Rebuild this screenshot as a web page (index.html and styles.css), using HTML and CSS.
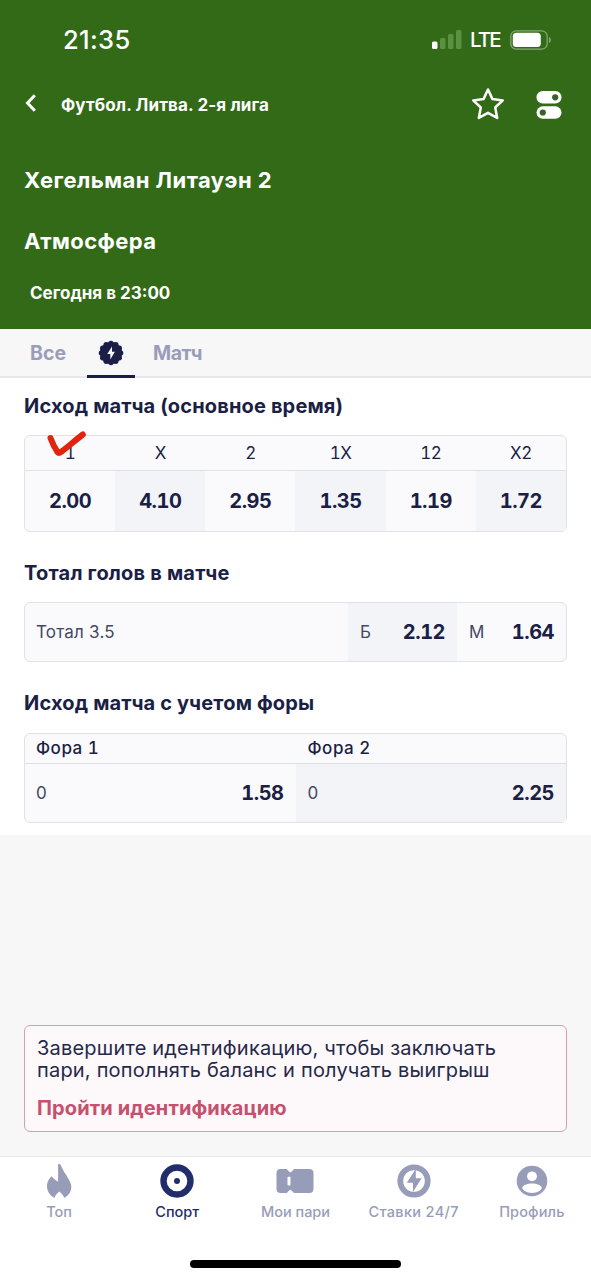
FILE: index.html
```html
<!DOCTYPE html>
<html lang="ru">
<head>
<meta charset="utf-8">
<title>Хегельман Литауэн 2 — Атмосфера</title>
<link rel="stylesheet" href="styles.css">
</head>
<body>
<div class="screen">
  <header class="header">
    <div class="status">
      <span class="clock">21:35</span>
      <div class="status-right">
        <svg width="30" height="20" viewBox="0 0 30 20"><g fill="#5b9043"><rect x="8" y="8" width="5.500" height="11" rx="1.500"/><rect x="16" y="4" width="5.500" height="15" rx="1.500"/><rect x="24" y="0" width="5.500" height="19" rx="1.500"/></g><rect x="0" y="11.500" width="5.500" height="7.500" rx="1.500" fill="#fff"/></svg>
        <span class="lte">LTE</span>
        <svg width="42" height="20" viewBox="0 0 42 20"><rect x=".8" y=".8" width="36.400" height="18.400" rx="5.500" fill="none" stroke="#84a974" stroke-width="1.300"/><rect x="2.800" y="2.800" width="28" height="14.200" rx="3.500" fill="#fff"/><path d="M39 7c2.400.8 2.400 5.200 0 6z" fill="#84a974"/></svg>
      </div>
    </div>
    <div class="topbar">
      <svg class="back" width="12" height="18" viewBox="0 0 12 18"><path d="M9.800 1.300 2.500 9l7.300 7.700" fill="none" stroke="#fff" stroke-width="3"/></svg>
      <span class="league">Футбол. Литва. 2-я лига</span>
      <svg class="star" width="34" height="34" viewBox="0 0 34 34"><path d="M17 2.500l4.500 9.600 10.300 1.300-7.600 7.100 2 10.400-9.200-5.100-9.200 5.100 2-10.400-7.600-7.100 10.300-1.300z" fill="none" stroke="#fff" stroke-width="2.500" stroke-linejoin="round"/></svg>
      <svg class="toggles" width="26" height="28" viewBox="0 0 26 28"><rect x=".5" y="0" width="25" height="12.500" rx="6.250" fill="#fff"/><rect x=".5" y="15.300" width="25" height="12.500" rx="6.250" fill="#fff"/><circle cx="19.200" cy="6.300" r="3.100" fill="#36612a"/><circle cx="6.800" cy="21.500" r="3.100" fill="#36612a"/></svg>
    </div>
    <div class="team home">Хегельман Литауэн 2</div>
    <div class="team away">Атмосфера</div>
    <div class="date">Сегодня в 23:00</div>
  </header>

  <nav class="tabs">
    <span class="tab all">Все</span>
    <span class="tab active">
      <svg width="26" height="26" viewBox="-13 -13 26 26"><g fill="#1b1f48"><circle r="11"/><circle cx="0" cy="-9.600" r="2.700"/><circle cx="4.800" cy="-8.310" r="2.700"/><circle cx="8.310" cy="-4.800" r="2.700"/><circle cx="9.600" cy="0" r="2.700"/><circle cx="8.310" cy="4.800" r="2.700"/><circle cx="4.800" cy="8.310" r="2.700"/><circle cx="0" cy="9.600" r="2.700"/><circle cx="-4.800" cy="8.310" r="2.700"/><circle cx="-8.310" cy="4.800" r="2.700"/><circle cx="-9.600" cy="0" r="2.700"/><circle cx="-8.310" cy="-4.800" r="2.700"/><circle cx="-4.800" cy="-8.310" r="2.700"/></g><path d="M1-6.500-3.700 1h3v5.500L3.900-1.200H1z" fill="#f7f7f9"/></svg>
    </span>
    <span class="tab match">Матч</span>
  </nav>

  <main class="markets">
    <h2 class="title t1">Исход матча (основное время)</h2>
    <div class="table outcome">
      <div class="heads"><span>1</span><span>X</span><span>2</span><span>1X</span><span>12</span><span>X2</span></div>
      <div class="odds"><b>2.00</b><b>4.10</b><b>2.95</b><b>1.35</b><b>1.19</b><b>1.72</b></div>
      <svg class="mark" width="44" height="30" viewBox="0 0 44 30"><path d="M5.500 8c2 5.500 4.500 10.500 7 14 1 1.200 2 1.200 3.500 0C22 17.500 30 10.500 37.800 4.500" fill="none" stroke="#e2230d" stroke-width="6" stroke-linecap="round" stroke-linejoin="round"/></svg>
    </div>

    <h2 class="title t2">Тотал голов в матче</h2>
    <div class="table total">
      <span class="name">Тотал 3.5</span>
      <div class="pick shade"><span>Б</span><b>2.12</b></div>
      <div class="pick"><span>М</span><b>1.64</b></div>
    </div>

    <h2 class="title t3">Исход матча с учетом форы</h2>
    <div class="table handicap">
      <div class="sides"><span>Фора 1</span><span>Фора 2</span></div>
      <div class="picks">
        <div class="pick"><span>0</span><b>1.58</b></div>
        <div class="pick shade"><span>0</span><b>2.25</b></div>
      </div>
    </div>
  </main>

  <section class="space">
    <div class="alert">
      <p>Завершите идентификацию, чтобы заключать<br>пари, пополнять баланс и получать выигрыш</p>
      <a class="link">Пройти идентификацию</a>
    </div>
  </section>

  <footer class="bottom">
    <div class="nav">
      <div class="item"><svg width="36" height="36" viewBox="0 0 36 36"><path d="M17.800 1c1.200 0 1.900.6 2.500 2.200C23.500 11 30.300 17.500 30.300 24c0 4.500-2.300 7.800-5.900 10.300-.9.600-1.400.4-1.700-.5-.9-2.200-2.500-3.700-4.400-5.300-1.800 1.600-3.500 3-4.400 5.300-.3.900-.8 1.100-1.700.5C8.600 31.800 6 28 6 23.300c0-4.600 2.500-8.300 4.700-10 1.500 1.900 4 4 6.400 5.500V2c0-.6.100-1 .7-1z" fill="#979db8"/></svg><span class="n1">Топ</span></div>
      <div class="item current"><svg width="36" height="36" viewBox="0 0 36 36"><circle cx="18" cy="18" r="13.500" fill="none" stroke="#222d6b" stroke-width="6.400"/><circle cx="18" cy="18" r="3" fill="#222d6b"/></svg><span class="n2">Спорт</span></div>
      <div class="item"><svg width="38" height="36" viewBox="0 0 38 36"><path d="M4.500 6h6.200l2.500 2.700c.8.800 1.500.8 2.300 0L18 6h15.500C36 6 37.500 7.500 37.500 10v16c0 2.500-1.500 4-4 4H18l-2.500-2.600c-.8-.8-1.500-.8-2.300 0L10.700 30H4.500C2 30 .5 28.500.5 26V10c0-2.500 1.500-4 4-4z" fill="#979db8"/><rect x="11.500" y="13.700" width="3" height="8.800" rx=".8" fill="#fff"/></svg><span class="n3">Мои пари</span></div>
      <div class="item"><svg width="36" height="36" viewBox="0 0 36 36"><circle cx="18" cy="18" r="13.700" fill="none" stroke="#979db8" stroke-width="5.800"/><path d="M19.800 6v9.200h5.800L17 29v-9.200h-6.200z" fill="#979db8"/></svg><span class="n4">Ставки 24/7</span></div>
      <div class="item"><svg width="36" height="36" viewBox="0 0 36 36"><circle cx="18" cy="18" r="15.300" fill="#979db8"/><circle cx="18" cy="13.300" r="4.900" fill="#fff"/><path d="M8.300 25c0-3 5-4.500 9.700-4.500s9.700 1.500 9.700 4.500c0 2-4.500 4.900-9.700 4.900S8.300 27 8.300 25z" fill="#fff"/></svg><span class="n5">Профиль</span></div>
    </div>
    <div class="homebar"></div>
  </footer>
</div>
</body>
</html>
```
FILE: styles.css
```css
* { box-sizing: border-box; }
body { margin: 0; font-family: Inter, "Noto Sans", sans-serif; color: #1b1f45; }
svg { display: block; flex: none; }
.screen { width: 591px; height: 1280px; display: flex; flex-direction: column; background: #f7f7f7; overflow: hidden; white-space: nowrap; }

.header { height: 329px; background: #336a18; color: #fff; font-weight: 700; }
.status { height: 80px; padding: 0 39px 1px 63px; display: flex; align-items: center; justify-content: space-between; }
.clock { font-size: 25.5px; font-weight: 500; letter-spacing: .35px; }
.status-right { display: flex; align-items: center; }
.lte { font-size: 20.5px; font-weight: 500; letter-spacing: -1.9px; margin: 0 8px 0 8px; width: 32px; }
.topbar { height: 50px; padding: 0 29px 0 25px; display: flex; align-items: center; }
.back { margin: 0 24px 4px 0; }
.league { font-size: 17px; flex: 1; letter-spacing: .12px; }
.star { margin: 0 31px 2px 0; }
.team { font-size: 22px; line-height: 60px; padding-left: 24px; letter-spacing: .45px; }
.home { margin-top: 20px; }
.away { margin-top: 1px; letter-spacing: .4px; }
.date { font-size: 17px; line-height: 30px; margin-top: 7px; padding-left: 30px; }

.tabs { height: 49px; padding-left: 30px; display: flex; align-items: stretch; border-bottom: 2px solid #e7e7e9; line-height: 49px; font-size: 19.5px; font-weight: 700; color: #9a9db8; }
.all { width: 57px; }
.active { width: 48px; height: 49px; display: flex; justify-content: center; padding-top: 11px; border-bottom: 3px solid #1b1f48; }
.match { margin-left: 18px; letter-spacing: -.5px; }

.markets { height: 457px; padding: 0 24px; background: #fff; }
.title { margin: 0; font-size: 20px; line-height: 57px; font-weight: 700; letter-spacing: .16px; }
.table { border: 1px solid #e1e1e6; border-radius: 6px; background: #fafafc; position: relative; }
b { font-size: 20px; font-weight: 700; font-variant-numeric: tabular-nums; letter-spacing: -.5px; }
.outcome { height: 97px; }
.heads { height: 35px; display: grid; grid-template-columns: repeat(6, 1fr); align-items: center; text-align: center; font-size: 17px; border-bottom: 1px solid #e1e1e6; font-variant-numeric: tabular-nums; letter-spacing: -.5px; }
.odds { height: 60px; line-height: 61px; display: grid; grid-template-columns: repeat(6, 1fr); text-align: center; overflow: hidden; }
.odds b:nth-child(even), .shade { background: #f3f4f7; }
.mark { position: absolute; left: 20px; top: -6px; }
.t2 { line-height: 60px; padding-top: 11px; height: 70px; letter-spacing: .2px; }
.total { height: 60px; display: flex; line-height: 59px; }
.name { flex: 1; padding-left: 11px; font-size: 17px; color: #444865; letter-spacing: .2px; }
.pick { display: flex; justify-content: space-between; padding: 0 12px 0 11px; }
.pick span { font-size: 17px; color: #444865; }
.total .pick { width: 109px; padding-left: 12px; }
.t3 { line-height: 60px; padding-top: 11px; height: 71px; letter-spacing: .16px; }
.handicap { height: 90px; }
.sides { height: 30px; line-height: 28px; display: grid; grid-template-columns: 1fr 1fr; font-size: 17px; font-weight: 500; border-bottom: 1px solid #dedee8; letter-spacing: .5px; font-variant-numeric: tabular-nums; }
.sides span { padding-left: 11px; }
.sides span:last-child, .picks .shade { padding-left: 12px; }
.picks { height: 58px; line-height: 58px; display: grid; grid-template-columns: 1fr 1fr; }

.space { flex: 1; padding: 190px 24px 0; }
.alert { height: 107px; padding: 12px 12px; border: 1px solid #d5a0b0; border-radius: 6px; background: #fdf8fa; }
.alert p { margin: 0; font-size: 20px; line-height: 21.5px; color: #25294a; letter-spacing: .2px; }
.link { display: block; margin-top: 12px; font-size: 20px; line-height: 30px; font-weight: 700; color: #c5516f; letter-spacing: .13px; }

.bottom { height: 124px; background: #fff; border-top: 1px solid #eaeaee; }
.nav { display: grid; grid-template-columns: repeat(5, 1fr); padding-top: 6px; }
.item { display: flex; flex-direction: column; align-items: center; font-size: 14.5px; line-height: 20px; font-weight: 500; color: #979db8; }
.item span { margin-top: 3px; }
.n4 { letter-spacing: .35px; }
.n5 { letter-spacing: .15px; }
.current { color: #222d6b; }
.homebar { width: 211px; height: 8px; margin: 38px auto 0; border-radius: 4px; background: #000; }
```
